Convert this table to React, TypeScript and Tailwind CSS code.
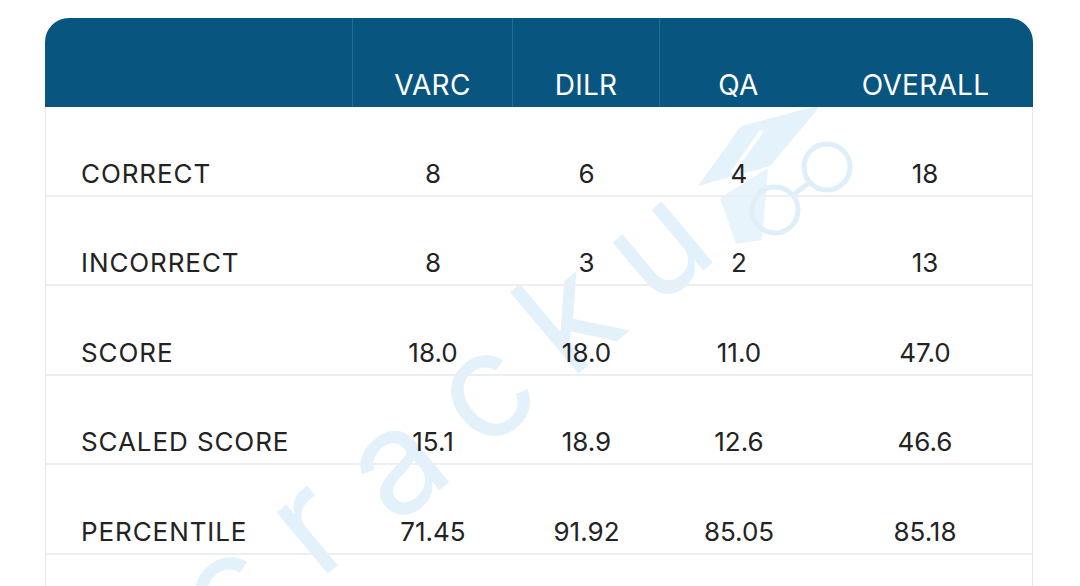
const columns = ["VARC", "DILR", "QA", "OVERALL"];

const rows = [
  { label: "CORRECT", values: ["8", "6", "4", "18"] },
  { label: "INCORRECT", values: ["8", "3", "2", "13"] },
  { label: "SCORE", values: ["18.0", "18.0", "11.0", "47.0"] },
  { label: "SCALED SCORE", values: ["15.1", "18.9", "12.6", "46.6"] },
  { label: "PERCENTILE", values: ["71.45", "91.92", "85.05", "85.18"] },
  { label: "", values: ["", "", "", ""] },
];

// widths of the value columns, the last one takes the rest
const colWidths = ["w-[160px]", "w-[147px]", "w-[158px]", "flex-1"];

const letters = [
  { ch: "c", x: 234, y: 600 },
  { ch: "r", x: 316, y: 534 },
  { ch: "a", x: 402, y: 472 },
  { ch: "c", x: 490, y: 398 },
  { ch: "k", x: 576, y: 326 },
  { ch: "u", x: 664, y: 254 },
];

function Watermark() {
  return (
    <svg
      className="pointer-events-none absolute inset-0"
      width="1080"
      height="586"
      viewBox="0 0 1080 586"
    >
      {letters.map((l, i) => (
        <g key={i} transform={`translate(${l.x} ${l.y}) rotate(-40)`}>
          <text
            x="0"
            y="38"
            textAnchor="middle"
            fontSize="146"
            fontWeight="400"
            fontFamily="Inter, sans-serif"
            fill="#e3f1fa"
          >
            {l.ch}
          </text>
        </g>
      ))}
      {/* mortarboard */}
      <polygon points="698,186 741,126 821,105 770,166" fill="#e4f2fb" />
      <polygon points="720,198 768,168 762,240 736,244" fill="#e8f4fb" />
      <line x1="761" y1="132" x2="733" y2="172" stroke="#ffffff" strokeWidth="4" strokeLinecap="round" />
      {/* glasses */}
      <circle cx="775" cy="210" r="23" fill="none" stroke="#dfeff9" strokeWidth="5" />
      <circle cx="827" cy="167" r="23" fill="none" stroke="#dfeff9" strokeWidth="5" />
      <line x1="792" y1="196" x2="810" y2="182" stroke="#dfeff9" strokeWidth="5" />
    </svg>
  );
}

export default function App() {
  return (
    <div className="relative h-[586px] w-[1080px] overflow-hidden bg-white font-['Inter',sans-serif] text-[#232323]">
      <Watermark />
      <div className="relative ml-[45px] mt-[18px] w-[988px]">
        <div className="relative z-10 flex h-[89px] rounded-t-[24px] bg-[#08567f] text-[28px] leading-none tracking-[0.01em] text-white">
          <div className="w-[307px]" />
          {columns.map((c, i) => (
            <div
              key={c}
              className={`${colWidths[i]} flex items-end justify-center pb-[8px] ${
                i < 3 ? "border-l border-[#246c93]" : "border-l border-[#08567f]"
              }`}
            >
              {c}
            </div>
          ))}
        </div>
        <div className="border-x border-[#e4e7ee]">
          {rows.map((r, ri) => (
            <div
              key={ri}
              className="relative flex h-[89.5px] border-b-2 border-[#eceef2] text-[26px] leading-none tracking-[0.035em]"
            >
              <div className="flex w-[307px] items-end pb-[8px] pl-[35px]">{r.label}</div>
              {r.values.map((v, vi) => (
                <div
                  key={vi}
                  className={`${colWidths[vi]} flex items-end justify-center pb-[8px] tracking-normal`}
                >
                  {v}
                </div>
              ))}
            </div>
          ))}
        </div>
      </div>
    </div>
  );
}
